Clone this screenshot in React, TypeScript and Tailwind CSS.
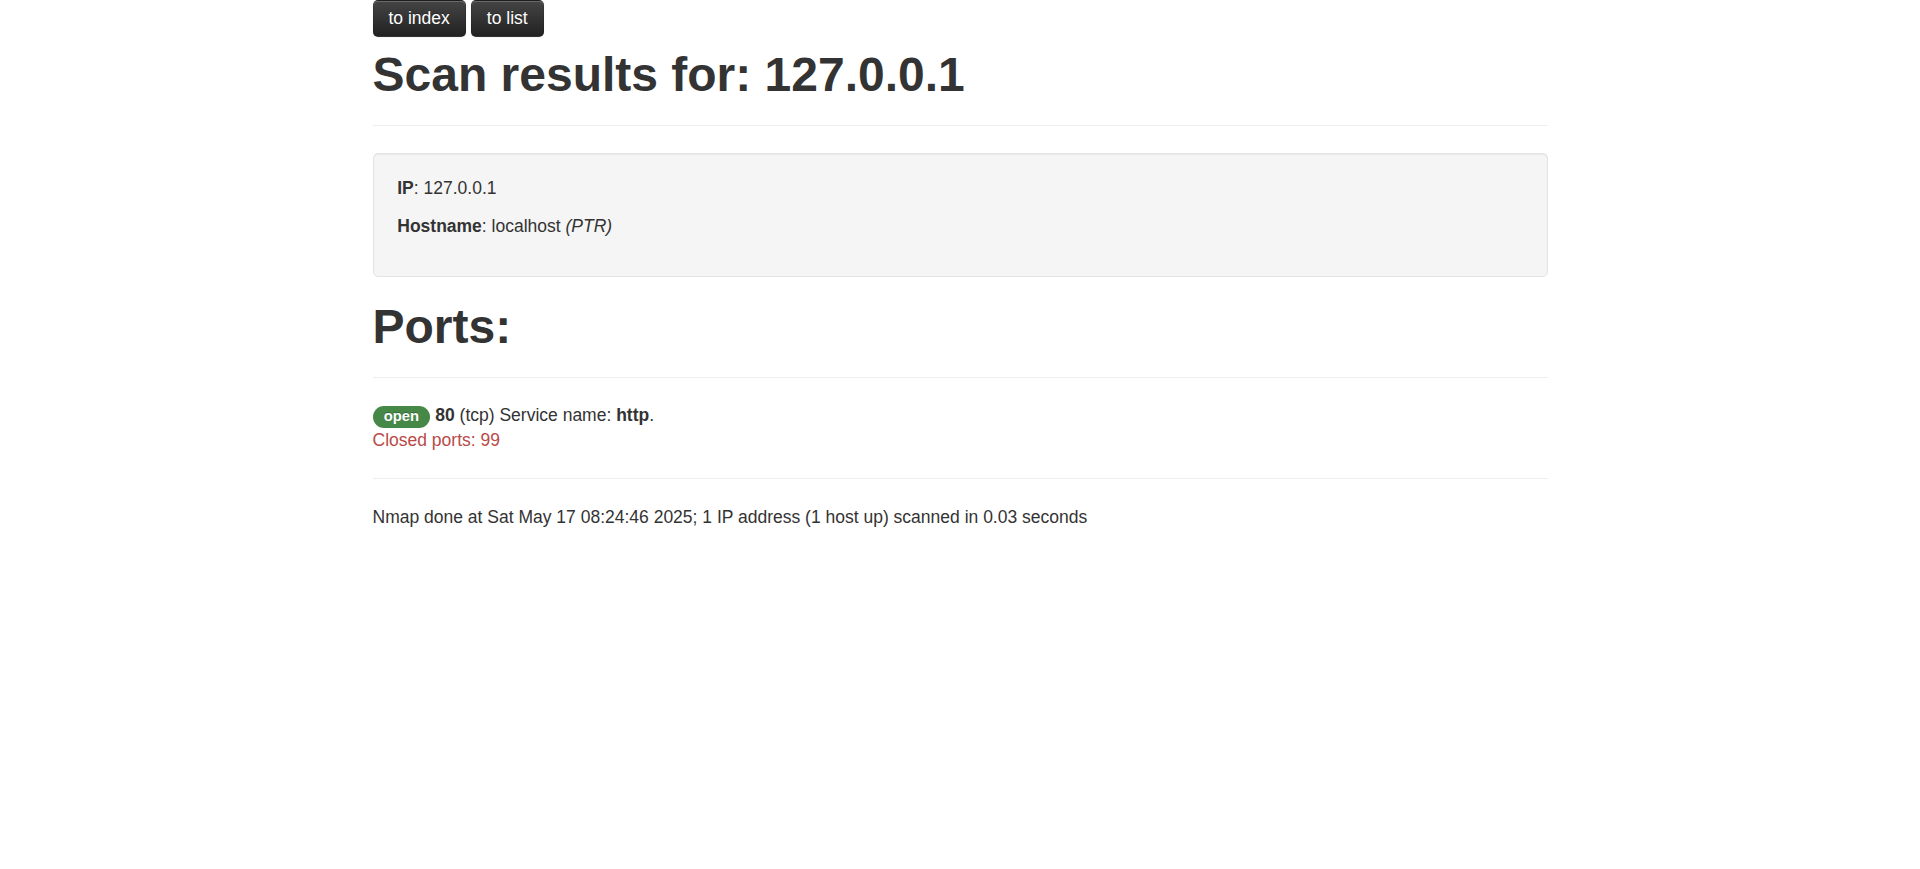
import React from "react";

function Btn({ children }: { children: React.ReactNode }) {
  return (
    <a
      href="#"
      className="inline-block px-[15px] py-[5px] text-[17.5px] leading-[25px] text-white no-underline rounded-[5px] border border-[rgba(0,0,0,0.1)] border-b-[rgba(0,0,0,0.25)] bg-[#363636] bg-[linear-gradient(to_bottom,#444444,#222222)] shadow-[inset_0_1px_0_rgba(255,255,255,0.2),0_1px_2px_rgba(0,0,0,0.05)] [text-shadow:0_-1px_0_rgba(0,0,0,0.25)]"
    >
      {children}
    </a>
  );
}

export default function App() {
  return (
    <div className="min-h-[869px] bg-white">
      <div className="w-[1175px] mx-auto text-[#333333] font-['Liberation_Sans',Arial,sans-serif] text-[17.5px] leading-[25px]">
        <div className="flex gap-[5px]">
          <Btn>to index</Btn>
          <Btn>to list</Btn>
        </div>

        <div className="mt-[12.5px] pb-[25.5px] border-b border-[#eeeeee]">
          <h1 className="text-[48px] leading-[50px] font-bold text-[#333333]">
            Scan results for: 127.0.0.1
          </h1>
        </div>

        <div className="mt-[26.5px] bg-[#f5f5f5] border border-[#e3e3e3] rounded-[5px] shadow-[inset_0_1px_1px_rgba(0,0,0,0.05)] px-[23.75px] pt-[22.5px] pb-[24.5px]">
          <p className="mb-[12.5px]">
            <b>IP</b>: 127.0.0.1
          </p>
          <p className="mb-[12.5px]">
            <b>Hostname</b>: localhost <i>(PTR)</i>
          </p>
        </div>

        <div className="mt-[25px] pb-[25px] border-b border-[#eeeeee]">
          <h1 className="text-[48px] leading-[50px] font-bold text-[#333333]">Ports:</h1>
        </div>

        <div className="mt-[25.5px]">
          <div>
            <span className="inline-block align-baseline rounded-full bg-[#468847] text-white font-bold text-[14.8px] leading-[17.5px] px-[11.25px] py-[2.5px] [text-shadow:0_-1px_0_rgba(0,0,0,0.25)]">
              open
            </span>{" "}
            <b>80</b> (tcp) Service name: <b>http</b>.
          </div>
          <div className="text-[#b94a48]">Closed ports: 99</div>
        </div>

        <hr className="my-[25px] border-0 border-t border-t-[#eeeeee] border-b border-b-white" />

        <p>Nmap done at Sat May 17 08:24:46 2025; 1 IP address (1 host up) scanned in 0.03 seconds</p>
      </div>
    </div>
  );
}
